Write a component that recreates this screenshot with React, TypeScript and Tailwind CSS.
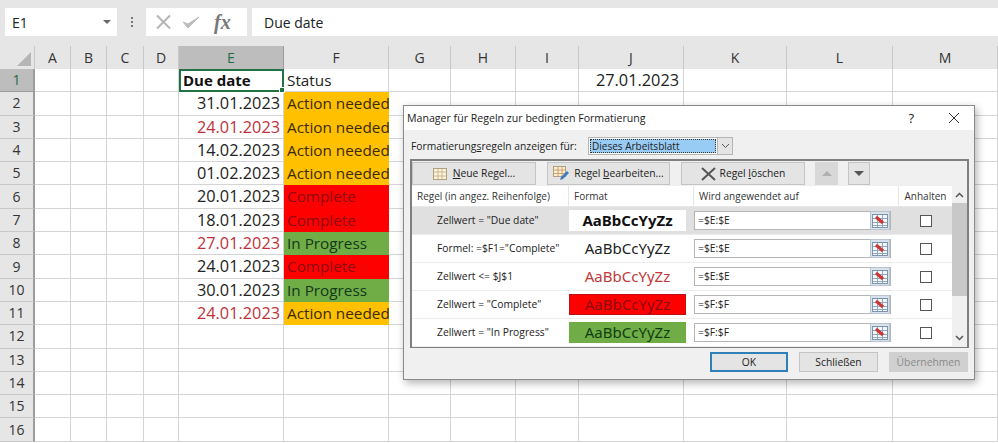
import React from "react";

const columns = ["A", "B", "C", "D", "E", "F", "G", "H", "I", "J", "K", "L", "M"];

const amber = "bg-[#ffc000]";
const red = "bg-[#ff0000]";
const green = "bg-[#70ad47]";

interface SheetRow {
	date: string;
	late?: boolean;
	status: string;
	fill: string;
}

const sheetRows: SheetRow[] = [
	{ date: "31.01.2023", status: "Action needed", fill: amber },
	{ date: "24.01.2023", late: true, status: "Action needed", fill: amber },
	{ date: "14.02.2023", status: "Action needed", fill: amber },
	{ date: "01.02.2023", status: "Action needed", fill: amber },
	{ date: "20.01.2023", status: "Complete", fill: red },
	{ date: "18.01.2023", status: "Complete", fill: red },
	{ date: "27.01.2023", late: true, status: "In Progress", fill: green },
	{ date: "24.01.2023", status: "Complete", fill: red },
	{ date: "30.01.2023", status: "In Progress", fill: green },
	{ date: "24.01.2023", late: true, status: "Action needed", fill: amber },
];

const rules = [
	{ label: 'Zellwert = "Due date"', range: "=$E:$E", box: "bg-white text-[#111] font-bold", selected: true },
	{ label: 'Formel: =$F1="Complete"', range: "=$E:$E", box: "text-[#222]" },
	{ label: "Zellwert <= $J$1", range: "=$E:$E", box: "text-[#c0393b]" },
	{ label: 'Zellwert = "Complete"', range: "=$F:$F", box: "bg-[#ff0000] text-[#8c0a12] border border-[#c0101a]" },
	{ label: 'Zellwert = "In Progress"', range: "=$F:$F", box: "bg-[#70ad47] text-[#0f3d12]" },
];

const gridCols = "grid-cols-[35px_36px_36px_37px_35px_105px_105px_62px_65px_63px_105px_103px_106px_105px]";

const RangeIcon = () => (
	<span className="flex h-[19px] w-[20px] shrink-0 items-center justify-center border border-[#b9c4d0] bg-[#d8e2ec]">
		<svg width="16" height="14" viewBox="0 0 16 14">
			<rect x="0.5" y="0.5" width="15" height="13" fill="#f4f7fb" stroke="#7f93ad" />
			<path d="M1 4.5h14M1 8.5h14M1 11.5h14M5.5 1v12M10.5 1v12" stroke="#8fa5c0" strokeWidth="1" />
			<path d="M4 3l7 6" stroke="#d0342c" strokeWidth="3" />
		</svg>
	</span>
);

const ToolButton = ({ width, children }: { width: string; children: React.ReactNode }) => (
	<button className={`flex h-[23px] ${width} items-center justify-center gap-1 border border-[#c4c4c4] bg-[#e4e4e4] text-[#222]`}>
		{children}
	</button>
);

export default function App() {
	return (
		<div className="relative h-[443px] w-[998px] overflow-hidden bg-white font-['Open_Sans',sans-serif] text-[#222]">
			{/* Formula bar */}
			<div className="flex h-[46px] items-start bg-[#e6e6e6] pl-[5px] pt-[8px]">
				<div className="flex h-[28px] w-[112px] items-center justify-between bg-white pl-[7px] pr-[6px] text-[14px]">
					<span>E1</span>
					<span className="h-0 w-0 border-x-[4px] border-t-[4px] border-x-transparent border-t-[#666]"></span>
				</div>
				<div className="flex h-[28px] w-[29px] flex-col items-center justify-center gap-[2px]">
					<span className="size-[2px] bg-[#777]"></span>
					<span className="size-[2px] bg-[#777]"></span>
					<span className="size-[2px] bg-[#777]"></span>
				</div>
				<div className="flex h-[28px] w-[101px] items-center bg-white pl-[9px]">
					<svg width="18" height="16" viewBox="0 0 18 16">
						<path d="M2 1.5l13 13M15 1.5l-13 13" stroke="#b5b5b5" strokeWidth="2" fill="none" />
					</svg>
					<svg className="ml-[8px]" width="20" height="16" viewBox="0 0 20 16">
						<path d="M2 8l5 6L18 3l-11 7z" fill="#bcbcbc" stroke="#bcbcbc" strokeWidth="1" />
					</svg>
					<span className="ml-[13px] font-['Liberation_Serif',serif] text-[20px] font-bold italic leading-none text-[#777]">
						fx
					</span>
				</div>
				<div className="ml-[5px] flex h-[28px] flex-1 items-center bg-white pl-[12px] text-[14px]">Due date</div>
			</div>

			{/* Sheet */}
			<div className={`grid ${gridCols} grid-rows-[23px] auto-rows-[23.3px] text-[15.3px] leading-none`}>
				{/* header row */}
				<div className="flex items-end justify-end border-r border-[#c8c8c8] bg-[#e6e6e6] p-[3px]">
					<span className="h-0 w-0 border-b-[14px] border-l-[14px] border-b-[#b5b5b5] border-l-transparent"></span>
				</div>
				{columns.map((c) => (
					<div
						key={c}
						className={`flex items-center justify-center border-r text-[14px] ${
							c === "E"
								? "border-[#9c9c9c] bg-[#bdbdbd] text-[#1f6e43]"
								: "border-[#c8c8c8] bg-[#e6e6e6] text-[#333]"
						}`}
					>
						{c}
					</div>
				))}

				{Array.from({ length: 16 }, (_, i) => i + 1).map((rowNo) => {
					const data = rowNo >= 2 && rowNo <= 11 ? sheetRows[rowNo - 2] : null;
					return (
						<React.Fragment key={rowNo}>
							<div
								className={`flex items-center justify-center border-b border-r-2 border-r-[#9c9c9c] text-[14px] ${
									rowNo === 1
										? "border-b-[#9c9c9c] bg-[#bdbdbd] text-[#1f6e43]"
										: "border-b-[#c8c8c8] bg-[#e6e6e6] text-[#333]"
								}`}
							>
								{rowNo}
							</div>
							{columns.map((c) => {
								const base = "border-b border-r border-[#d4d4d4]";
								if (c === "E" && rowNo === 1) {
									return (
										<div
											key={c}
											className="relative flex items-center border-2 border-[#217346] pl-[2px] text-[15px] font-bold text-[#111]"
										>
											Due date
											<span className="absolute -bottom-[3px] -right-[3px] size-[6px] border border-white bg-[#217346]"></span>
										</div>
									);
								}
								if (c === "F" && rowNo === 1) {
									return (
										<div key={c} className={`flex items-center pl-[3px] ${base}`}>
											Status
										</div>
									);
								}
								if (c === "J" && rowNo === 1) {
									return (
										<div key={c} className={`flex items-center justify-end pr-[4px] text-[16.3px] ${base}`}>
											27.01.2023
										</div>
									);
								}
								if (c === "E" && data) {
									return (
										<div
											key={c}
											className={`flex items-center justify-end pr-[3px] text-[16.3px] ${base} ${data.late ? "text-[#c0303a]" : ""}`}
										>
											{data.date}
										</div>
									);
								}
								if (c === "F" && data) {
									return (
										<div
											key={c}
											className={`flex items-center whitespace-nowrap pl-[3px] ${data.fill} ${
												data.fill === red ? "text-[#8c0a12]" : data.fill === green ? "text-[#12391a]" : "text-[#3a2a08]"
											}`}
										>
											{data.status}
										</div>
									);
								}
								return <div key={c} className={base}></div>;
							})}
						</React.Fragment>
					);
				})}
			</div>

			{/* Dialog */}
			<div className="absolute left-[403px] top-[105px] h-[275px] w-[572px] border border-[#8a8a8a] bg-[#f0f0f0] text-[10.3px] leading-none shadow-[2px_3px_8px_rgba(0,0,0,0.3)]">
				<div className="flex h-[24px] items-center justify-between bg-white pl-[3px] pr-[14px] text-[10.6px]">
					<span>Manager für Regeln zur bedingten Formatierung</span>
					<div className="flex items-center gap-[34px]">
						<span className="text-[13px]">?</span>
						<svg width="12" height="12" viewBox="0 0 12 12">
							<path d="M1 1l10 10M11 1L1 11" stroke="#333" strokeWidth="1" fill="none" />
						</svg>
					</div>
				</div>

				<div className="flex items-center pl-[7px] pt-[7px]">
					<span className="w-[177px]">
						Formatierung<span className="underline">s</span>regeln anzeigen für:
					</span>
					<div className="flex h-[18px] w-[145px] border border-[#b5b5b5] bg-white">
						<div className="m-[1px] flex flex-1 items-center border border-dotted border-[#333] bg-[#99ccf5] pl-[1px] text-[10px]">
							Dieses Arbeitsblatt
						</div>
						<div className="flex w-[15px] items-center justify-center border-l border-[#b5b5b5] bg-[#e4e4e4]">
							<svg width="9" height="6" viewBox="0 0 9 6">
								<path d="M1 1l3.5 3.5L8 1" stroke="#555" fill="none" />
							</svg>
						</div>
					</div>
				</div>

				{/* Rule list box */}
				<div className="ml-[6px] mt-[4px] h-[189px] w-[559px] border-2 border-[#7f7f7f] bg-white">
					<div className="flex h-[25px] items-center bg-[#f0f0f0]">
						<ToolButton width="w-[124px]">
							<svg width="14" height="12" viewBox="0 0 14 12">
								<rect x="0.5" y="0.5" width="13" height="11" fill="#fdf3d8" stroke="#b0a080" />
								<path d="M1 4h12M1 8h12M5 1v10M9 1v10" stroke="#c8b890" />
							</svg>
							<span className="ml-[2px]">
								<span className="underline">N</span>eue Regel...
							</span>
						</ToolButton>
						<div className="ml-[11px]">
							<ToolButton width="w-[123px]">
								<svg width="17" height="15" viewBox="0 0 17 15">
									<rect x="0.5" y="0.5" width="12" height="10" fill="#fdf0d0" stroke="#b0a080" />
									<path d="M1 4h11M1 7.5h11M5 1v9M9 1v9" stroke="#d0a070" />
									<path d="M7 14l1-3 6-6 2 2-6 6z" fill="#3d7cc0" />
								</svg>
								<span>
									Regel <span className="underline">b</span>earbeiten...
								</span>
							</ToolButton>
						</div>
						<div className="ml-[11px]">
							<ToolButton width="w-[124px]">
								<svg width="15" height="14" viewBox="0 0 15 14">
									<path d="M1 1l13 12M14 1L1 13" stroke="#555" strokeWidth="2" fill="none" />
								</svg>
								<span>
									Regel <span className="underline">l</span>öschen
								</span>
							</ToolButton>
						</div>
						<button className="ml-[10px] flex h-[23px] w-[23px] items-center justify-center bg-[#d8d8d8]">
							<span className="h-0 w-0 border-x-[5px] border-b-[5px] border-x-transparent border-b-[#b0b0b0]"></span>
						</button>
						<button className="ml-[10px] flex h-[23px] w-[22px] items-center justify-center border border-[#c4c4c4] bg-[#e4e4e4]">
							<span className="h-0 w-0 border-x-[5px] border-t-[5px] border-x-transparent border-t-[#555]"></span>
						</button>
					</div>

					<div className="flex">
						<div className="w-[540px]">
							<div className="flex h-[21px] items-center border-b border-[#e8e8e8] text-[10px] text-[#333]">
								<div className="flex h-full w-[157px] items-center border-r border-[#e4e4e4] pl-[5px]">
									Regel (in angez. Reihenfolge)
								</div>
								<div className="flex h-full w-[125px] items-center border-r border-[#e4e4e4] pl-[5px]">Format</div>
								<div className="flex h-full w-[205px] items-center border-r border-[#e4e4e4] pl-[5px]">
									Wird angewendet auf
								</div>
								<div className="flex h-full flex-1 items-center justify-center">Anhalten</div>
							</div>
							{rules.map((rule) => (
								<div
									key={rule.label}
									className={`flex h-[28px] items-center border-b border-[#ececec] ${rule.selected ? "bg-[#e0e0e0]" : "bg-white"}`}
								>
									<div className="w-[157px] whitespace-nowrap pl-[25px]">{rule.label}</div>
									<div
										className={`flex h-[21px] w-[117px] shrink-0 items-center justify-center font-['Noto_Sans',sans-serif] text-[15px] ${rule.box}`}
									>
										AaBbCcYyZz
									</div>
									<div className="ml-[8px] flex h-[19px] w-[197px] shrink-0 items-center justify-between border border-[#b5b5b5] bg-white pl-[3px]">
										<span>{rule.range}</span>
										<RangeIcon />
									</div>
									<div className="flex flex-1 justify-center pl-[8px]">
										<span className="size-[12px] border border-[#555] bg-white"></span>
									</div>
								</div>
							))}
						</div>
						{/* Scrollbar */}
						<div className="flex h-[161px] w-[15px] flex-col items-center bg-[#f0f0f0]">
							<div className="flex h-[17px] items-center">
								<svg width="9" height="6" viewBox="0 0 9 6">
									<path d="M1 5l3.5-3.5L8 5" stroke="#555" strokeWidth="1.5" fill="none" />
								</svg>
							</div>
							<div className="h-[93px] w-full bg-[#c8c8c8]"></div>
							<div className="mt-auto flex h-[18px] items-center">
								<svg width="9" height="6" viewBox="0 0 9 6">
									<path d="M1 1l3.5 3.5L8 1" stroke="#555" strokeWidth="1.5" fill="none" />
								</svg>
							</div>
						</div>
					</div>
				</div>

				{/* Bottom buttons */}
				<div className="flex justify-end gap-[11px] pr-[6px] pt-[4px]">
					<button className="h-[20px] w-[78px] border-2 border-[#2f7fb8] bg-[#e4e4e4]">OK</button>
					<button className="h-[20px] w-[79px] border border-[#c4c4c4] bg-[#e4e4e4]">Schließen</button>
					<button className="h-[20px] w-[79px] bg-[#d0d0d0] text-[#8a8a8a]">Übernehmen</button>
				</div>
			</div>
		</div>
	);
}
